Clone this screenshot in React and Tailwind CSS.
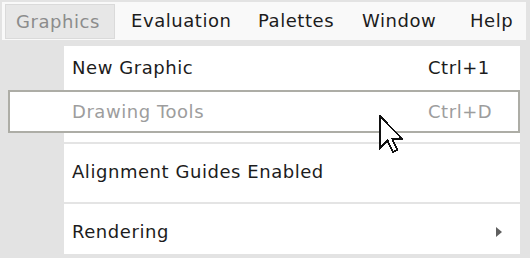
import React from "react";

const font = { fontFamily: '"DejaVu Sans", Verdana, sans-serif' };

function Cursor() {
  return (
    <svg
      className="absolute left-[379px] top-[115px]"
      width="24"
      height="38"
      viewBox="0 0 12 19"
      shapeRendering="crispEdges"
    >
      <path
        d="M0.5 0.5 L0.5 16.5 L4.3 12.8 L7 18.5 L9.2 17.5 L6.6 11.9 L11.5 11.9 Z"
        fill="#ffffff"
        stroke="#111111"
        strokeWidth="0.9"
        strokeLinejoin="miter"
      />
    </svg>
  );
}

function Row({ label, shortcut, arrow }) {
  return (
    <div className="flex h-[44px] w-[512px]">
      <div className="w-[56px]" />
      <div className="flex flex-1 items-center bg-white pl-[8px] text-[#1c1c1c]">
        <span className="w-[356px] whitespace-nowrap">{label}</span>
        {shortcut && <span className="whitespace-nowrap">{shortcut}</span>}
        {arrow && (
          <svg className="ml-auto mr-[18px]" width="6" height="10" viewBox="0 0 6 10">
            <path d="M0 0 L6 5 L0 10 Z" fill="#5f5f5f" />
          </svg>
        )}
      </div>
    </div>
  );
}

function Sep({ top }) {
  return (
    <div className="flex w-[512px]">
      <div className="w-[56px]" />
      <div className={`flex-1 bg-white ${top === 9 ? "pt-[9px] pb-[6px]" : "pt-[8px] pb-[6px]"}`}>
        <div className="h-[2px] bg-[#e4e4e4]" />
      </div>
    </div>
  );
}

export default function App() {
  return (
    <div
      className="relative h-[258px] w-[530px] overflow-hidden bg-[#e3e3e3] pl-[2px] pt-[2px] text-[18px] leading-none tracking-[0.55px]"
      style={font}
    >
      {/* menu bar */}
      <div className="flex h-[38px] w-[524px] items-center bg-[#f9f9f9] text-[#1c1c1c]">
        <div className="ml-[3px] mt-[2px] flex h-[35px] w-[110px] items-center self-start border border-[#dadada] bg-[#e7e7e7] pl-[10px] text-[#8c8c8c]">
          Graphics
        </div>
        <div className="ml-[16px] w-[127px] whitespace-nowrap">Evaluation</div>
        <div className="w-[104px] whitespace-nowrap">Palettes</div>
        <div className="w-[108px] whitespace-nowrap">Window</div>
        <div className="whitespace-nowrap">Help</div>
      </div>

      {/* dropdown */}
      <div className="ml-[6px] mt-[6px] flex flex-col">
        <Row label="New Graphic" shortcut="Ctrl+1" />
        <div className="flex h-[43px] w-[512px] items-center border-2 border-[#adada6] bg-white text-[#9d9d9d]">
          <div className="w-[54px]" />
          <div className="flex items-center pl-[8px]">
            <span className="w-[356px] whitespace-nowrap">Drawing Tools</span>
            <span className="whitespace-nowrap">Ctrl+D</span>
          </div>
        </div>
        <Sep top={9} />
        <Row label="Alignment Guides Enabled" />
        <Sep top={8} />
        <Row label="Rendering" arrow />
      </div>

      <Cursor />
    </div>
  );
}
